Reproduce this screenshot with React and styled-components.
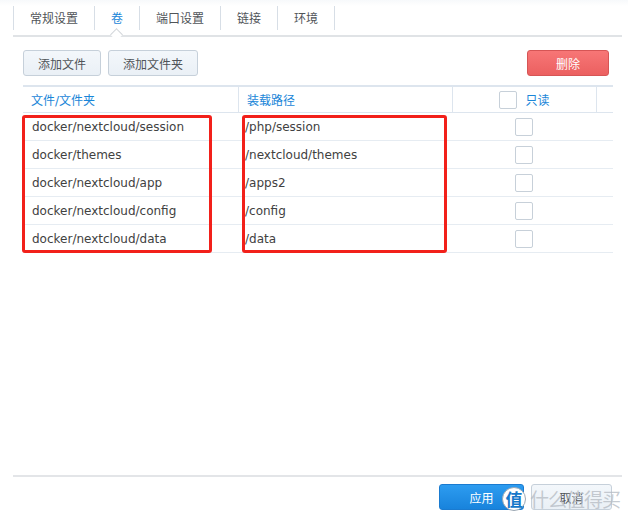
import React from "react";
import styled, { createGlobalStyle } from "styled-components";

const Global = createGlobalStyle`
  html, body { margin: 0; padding: 0; background: #fff; }
  body { font-family: "DejaVu Sans", "Noto Sans CJK SC", sans-serif; font-size: 12px; color: #414141; }
  * { box-sizing: border-box; }
`;

const Page = styled.div`
  width: 628px;
  height: 518px;
  display: flex;
  flex-direction: column;
  position: relative;
  overflow: hidden;
  background: linear-gradient(#f7f9fb 0, #fff 6px);
`;

const TabBar = styled.div`
  margin: 0 6px 0 13px;
  height: 37px;
  display: flex;
  align-items: center;
  border-bottom: 2px solid #e0e3e6;
  position: relative;
`;

const Tab = styled.div`
  height: 24px;
  padding: 0 16px;
  display: flex;
  align-items: center;
  border-left: 1px solid #d7dee6;
  color: ${(p) => (p.$active ? "#1a86d8" : "#505458")};
  position: relative;
  &:last-child { border-right: 1px solid #d7dee6; }
`;

const Caret = styled.span`
  position: absolute;
  left: 50%;
  bottom: -9px;
  width: 9px;
  height: 9px;
  margin-left: -5px;
  background: #fff;
  border-left: 1px solid #d0d4d8;
  border-top: 1px solid #d0d4d8;
  transform: rotate(45deg);
`;

const Toolbar = styled.div`
  margin: 13px 19px 0 23px;
  height: 26px;
  display: flex;
  gap: 7px;
`;

const Button = styled.button`
  height: 26px;
  padding: 0 14px;
  font: inherit;
  font-size: 12px;
  border-radius: 3px;
  border: 1px solid ${(p) => (p.$kind === "danger" ? "#d65555" : p.$kind === "primary" ? "#1a7bd0" : "#c6d0da")};
  background: ${(p) =>
    p.$kind === "danger"
      ? "linear-gradient(#f77676, #eb6060)"
      : p.$kind === "primary"
      ? "linear-gradient(#2d9cf0, #1883dc)"
      : "linear-gradient(#f3f7fb, #eaf0f6)"};
  color: ${(p) => (p.$kind ? "#fff" : "#505458")};
  width: ${(p) => (p.$w ? p.$w + "px" : "auto")};
  margin-left: ${(p) => (p.$push ? "auto" : "0")};
`;

const TableWrap = styled.div`
  margin: 9px 15px 0 23px;
  position: relative;
`;

const Grid = styled.div`
  display: grid;
  grid-template-columns: 215px 214px 144px 17px;
`;

const HeadCell = styled.div`
  height: 28px;
  border-top: 2px solid #dde5ee;
  border-bottom: 1px solid #dde5ee;
  border-left: ${(p) => (p.$first ? "none" : "1px solid #dde5ee")};
  color: #1a86d8;
  display: flex;
  align-items: center;
  justify-content: ${(p) => (p.$center ? "center" : "flex-start")};
  gap: 8px;
  padding-left: ${(p) => (p.$center ? 0 : 8)}px;
`;

const Cell = styled.div`
  height: 28px;
  border-bottom: 1px solid #e6ecf2;
  display: flex;
  align-items: center;
  justify-content: ${(p) => (p.$center ? "center" : "flex-start")};
  padding-left: ${(p) => (p.$center ? 0 : p.$pad)}px;
  color: #414141;
`;

const Check = styled.span`
  width: 18px;
  height: 18px;
  border: 1px solid #c7d0d9;
  border-radius: 2px;
  background: #fff;
  display: inline-block;
`;

const Mark = styled.div`
  position: absolute;
  top: 30px;
  height: 138px;
  border: 3px solid #f2201a;
  border-radius: 3px;
  left: ${(p) => p.$x}px;
  width: ${(p) => p.$w}px;
  pointer-events: none;
`;

const Spacer = styled.div`
  flex: 1;
`;

const Footer = styled.div`
  margin: 0 6px 0 13px;
  border-top: 2px solid #e3e5e8;
  height: 43px;
  display: flex;
  align-items: flex-start;
  justify-content: flex-end;
  gap: 7px;
  padding: 7px 10px 0 0;
`;

const Watermark = styled.div`
  position: absolute;
  left: 502px;
  top: 485px;
  display: flex;
  align-items: center;
  gap: 4px;
  pointer-events: none;
`;

const Badge = styled.span`
  width: 24px;
  height: 24px;
  border-radius: 50%;
  background: #fff;
  border: 1px solid #9aa6b2;
  color: #1677c9;
  font-size: 17px;
  font-weight: bold;
  display: flex;
  align-items: center;
  justify-content: center;
  font-family: "Noto Sans CJK SC", sans-serif;
`;

const WmText = styled.span`
  font-size: 19px;
  color: rgba(180, 186, 194, 0.75);
  font-family: "Noto Sans CJK SC", sans-serif;
  letter-spacing: -1px;
  white-space: nowrap;
`;

const rows = [
  ["docker/nextcloud/session", "/php/session"],
  ["docker/themes", "/nextcloud/themes"],
  ["docker/nextcloud/app", "/apps2"],
  ["docker/nextcloud/config", "/config"],
  ["docker/nextcloud/data", "/data"],
];

const tabs = ["常规设置", "卷", "端口设置", "链接", "环境"];

export default function App() {
  return (
    <>
      <Global />
      <Page>
        <TabBar>
          {tabs.map((t) => (
            <Tab key={t} $active={t === "卷"}>
              {t}
              {t === "卷" && <Caret />}
            </Tab>
          ))}
        </TabBar>
        <Toolbar>
          <Button>添加文件</Button>
          <Button>添加文件夹</Button>
          <Button $kind="danger" $w={82} $push>
            删除
          </Button>
        </Toolbar>
        <TableWrap>
          <Grid>
            <HeadCell $first>文件/文件夹</HeadCell>
            <HeadCell>装载路径</HeadCell>
            <HeadCell $center>
              <Check />
              只读
            </HeadCell>
            <HeadCell />
            {rows.map(([a, b]) => (
              <React.Fragment key={a}>
                <Cell $pad={9}>{a}</Cell>
                <Cell $pad={7}>{b}</Cell>
                <Cell $center>
                  <Check />
                </Cell>
                <Cell />
              </React.Fragment>
            ))}
          </Grid>
          <Mark $x={-1} $w={190} />
          <Mark $x={219} $w={205} />
        </TableWrap>
        <Spacer />
        <Footer>
          <Button $kind="primary" $w={85}>
            应用
          </Button>
          <Button $w={81}>取消</Button>
        </Footer>
        <Watermark>
          <Badge>值</Badge>
          <WmText>什么值得买</WmText>
        </Watermark>
      </Page>
    </>
  );
}
